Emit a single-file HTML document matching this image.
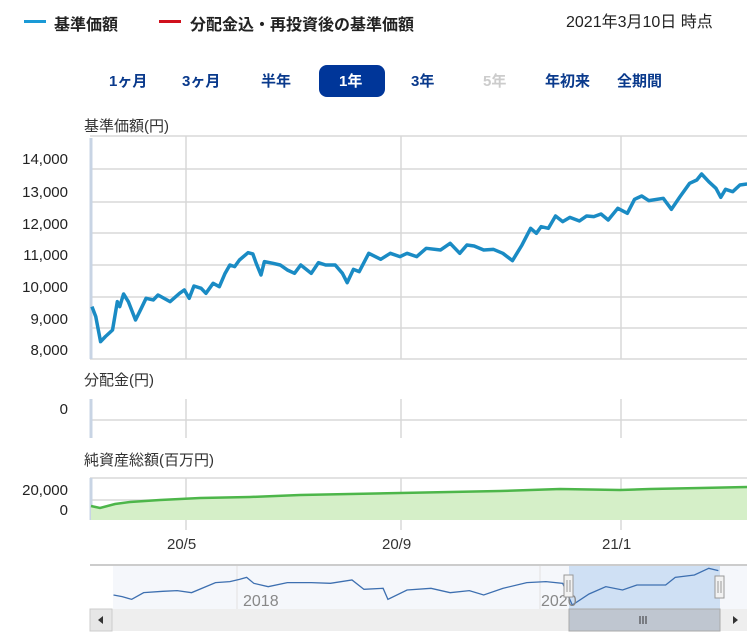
<!DOCTYPE html>
<html><head><meta charset="utf-8"><style>
body{margin:0;width:747px;height:638px;background:#fff;overflow:hidden;font-family:"Liberation Sans","Noto Sans CJK JP",sans-serif;position:relative}
.a{position:absolute;white-space:nowrap}
.leg{font-weight:bold;font-size:16px;color:#222;top:11px}
.bt{font-weight:bold;font-size:15px;color:#0a3a8c;top:70px}
.yl{font-size:15px;color:#222;text-align:right;width:68px;left:0}
.lab{font-size:15px;color:#333}
</style></head><body>
<div class="a" style="left:24px;top:20px;width:22px;height:3px;background:#1a9ad6"></div>
<div class="a leg" style="left:54px">基準価額</div>
<div class="a" style="left:159px;top:20px;width:22px;height:3px;background:#d0101c"></div>
<div class="a leg" style="left:190px">分配金込・再投資後の基準価額</div>
<div class="a" style="left:566px;top:8px;font-size:16px;color:#222">2021年3月10日 時点</div>

<div class="a bt" style="left:109px">1ヶ月</div>
<div class="a bt" style="left:182px">3ヶ月</div>
<div class="a bt" style="left:261px">半年</div>
<div class="a" style="left:319px;top:65px;width:66px;height:32px;background:#003699;border-radius:8px"></div>
<div class="a bt" style="left:339px;color:#fff">1年</div>
<div class="a bt" style="left:411px">3年</div>
<div class="a bt" style="left:483px;color:#ccc">5年</div>
<div class="a bt" style="left:545px">年初来</div>
<div class="a bt" style="left:617px">全期間</div>

<div class="a lab" style="left:84px;top:115px">基準価額(円)</div>
<div class="a yl" style="top:151px">14,000</div>
<div class="a yl" style="top:184px">13,000</div>
<div class="a yl" style="top:216px">12,000</div>
<div class="a yl" style="top:247px">11,000</div>
<div class="a yl" style="top:279px">10,000</div>
<div class="a yl" style="top:311px">9,000</div>
<div class="a yl" style="top:342px">8,000</div>
<div class="a lab" style="left:84px;top:369px">分配金(円)</div>
<div class="a yl" style="top:401px">0</div>
<div class="a lab" style="left:84px;top:449px">純資産総額(百万円)</div>
<div class="a yl" style="top:482px">20,000</div>
<div class="a yl" style="top:502px">0</div>
<div class="a lab" style="left:167px;top:536px">20/5</div>
<div class="a lab" style="left:382px;top:536px">20/9</div>
<div class="a lab" style="left:602px;top:536px">21/1</div>

<svg class="a" style="left:0;top:0" width="747" height="638">
<g stroke="#d8d8d8" stroke-width="1.5" fill="none">
<line x1="90" y1="136" x2="747" y2="136"/>
<line x1="90" y1="169" x2="747" y2="169"/><line x1="90" y1="202" x2="747" y2="202"/>
<line x1="90" y1="233" x2="747" y2="233"/><line x1="90" y1="265" x2="747" y2="265"/>
<line x1="90" y1="297" x2="747" y2="297"/><line x1="90" y1="328" x2="747" y2="328"/>
<line x1="90" y1="359" x2="747" y2="359"/>
<line x1="186" y1="136" x2="186" y2="359"/><line x1="401" y1="136" x2="401" y2="359"/><line x1="621" y1="136" x2="621" y2="359"/>
<line x1="90" y1="420" x2="747" y2="420"/>
<line x1="186" y1="399" x2="186" y2="438"/><line x1="401" y1="399" x2="401" y2="438"/><line x1="621" y1="399" x2="621" y2="438"/>
<line x1="90" y1="478" x2="747" y2="478"/><line x1="90" y1="500" x2="747" y2="500"/>
<line x1="186" y1="478" x2="186" y2="530"/><line x1="401" y1="478" x2="401" y2="530"/><line x1="621" y1="478" x2="621" y2="530"/>
</g>
<g stroke="#c8d4e4" stroke-width="3"><line x1="91" y1="138" x2="91" y2="359"/><line x1="91" y1="399" x2="91" y2="438"/><line x1="91" y1="478" x2="91" y2="520"/></g>
<path d="M91,506 L100,508 L115,504 L130,502 L160,500 L200,498 L250,497 L300,495 L350,494 L400,493 L450,492 L500,491 L560,489 L620,490 L650,489 L700,488 L747,487 L747,520 L91,520Z" fill="#d5efc8"/>
<path d="M91,506 L100,508 L115,504 L130,502 L160,500 L200,498 L250,497 L300,495 L350,494 L400,493 L450,492 L500,491 L560,489 L620,490 L650,489 L700,488 L747,487" fill="none" stroke="#4db64a" stroke-width="2.5"/>
<g transform="translate(0,110) scale(0.4789,0.3333)">
<path vector-effect="non-scaling-stroke" fill="none" stroke="#1a8bc4" stroke-width="3.5" stroke-linejoin="round" d="M192,590 L200,620 L210,695 L220,680 L235,660 L245,575 L250,590 L258,552 L268,575 L283,630 L295,595 L305,565 L320,570 L330,555 L355,575 L375,550 L385,540 L395,565 L405,528 L420,535 L430,550 L445,520 L458,530 L470,490 L480,465 L490,470 L500,450 L518,428 L528,432 L535,460 L545,495 L552,455 L570,460 L585,465 L600,480 L615,490 L628,465 L650,490 L665,458 L680,465 L700,465 L715,490 L725,518 L738,478 L750,485 L770,430 L795,448 L815,430 L835,440 L850,430 L870,440 L890,415 L920,420 L940,400 L960,430 L975,405 L990,408 L1010,420 L1030,418 L1050,430 L1070,452 L1090,405 L1108,355 L1120,370 L1130,350 L1145,355 L1160,318 L1175,335 L1190,322 L1210,333 L1225,318 L1240,320 L1255,312 L1270,330 L1290,295 L1310,310 L1325,268 L1340,258 L1355,272 L1385,265 L1402,298 L1420,260 L1440,220 L1455,210 L1465,192 L1480,215 L1495,235 L1505,262 L1515,238 L1530,245 L1545,225 L1560,222"/>
</g>
<line x1="90" y1="565" x2="747" y2="565" stroke="#bbb" stroke-width="1.5"/>
<rect x="113" y="566" width="634" height="43" fill="#f5f7fb"/>
<line x1="237" y1="566" x2="237" y2="609" stroke="#e2e2e2"/><line x1="540" y1="566" x2="540" y2="609" stroke="#e2e2e2"/>
<rect x="569" y="566" width="151" height="43" fill="#cfe0f4"/>
<rect x="90" y="609" width="657" height="22" fill="#eee"/>
<rect x="90" y="609" width="22" height="22" fill="#e6e6e6" stroke="#ccc"/>
<path d="M98,620 L103,616 L103,624Z" fill="#333"/>
<rect x="569" y="609" width="151" height="22" fill="#bfc6d0" stroke="#aaa"/>
<g stroke="#333"><line x1="640" y1="616" x2="640" y2="624"/><line x1="643" y1="616" x2="643" y2="624"/><line x1="646" y1="616" x2="646" y2="624"/></g>
<path d="M738,620 L733,616 L733,624Z" fill="#333"/>
<g transform="translate(0,520) scale(0.4789,0.3333)">
<path vector-effect="non-scaling-stroke" fill="none" stroke="#3d6fb0" stroke-width="1.3" d="M237,225 L255,230 L275,238 L300,218 L340,214 L370,212 L400,218 L450,188 L480,185 L500,178 L515,172 L530,190 L560,200 L600,188 L650,188 L690,190 L735,180 L760,208 L800,205 L810,238 L850,210 L900,205 L940,218 L980,212 L1010,225 L1050,205 L1100,188 L1140,185 L1175,190 L1195,255 L1230,222 L1265,200 L1300,210 L1330,195 L1390,195 L1410,172 L1450,165 L1480,145 L1500,152"/>
</g>
<text x="243" y="606" font-size="16" fill="#888" font-family="Liberation Sans,sans-serif">2018</text>
<text x="541" y="606" font-size="16" fill="#888" font-family="Liberation Sans,sans-serif">2020</text>
<rect x="564" y="575" width="9" height="22" fill="#f2f2f2" stroke="#999"/>
<rect x="715" y="576" width="9" height="22" fill="#f2f2f2" stroke="#999"/>
<g stroke="#999"><line x1="567" y1="580" x2="567" y2="592"/><line x1="570" y1="580" x2="570" y2="592"/><line x1="718" y1="581" x2="718" y2="593"/><line x1="721" y1="581" x2="721" y2="593"/></g>
</svg>
</body></html>
